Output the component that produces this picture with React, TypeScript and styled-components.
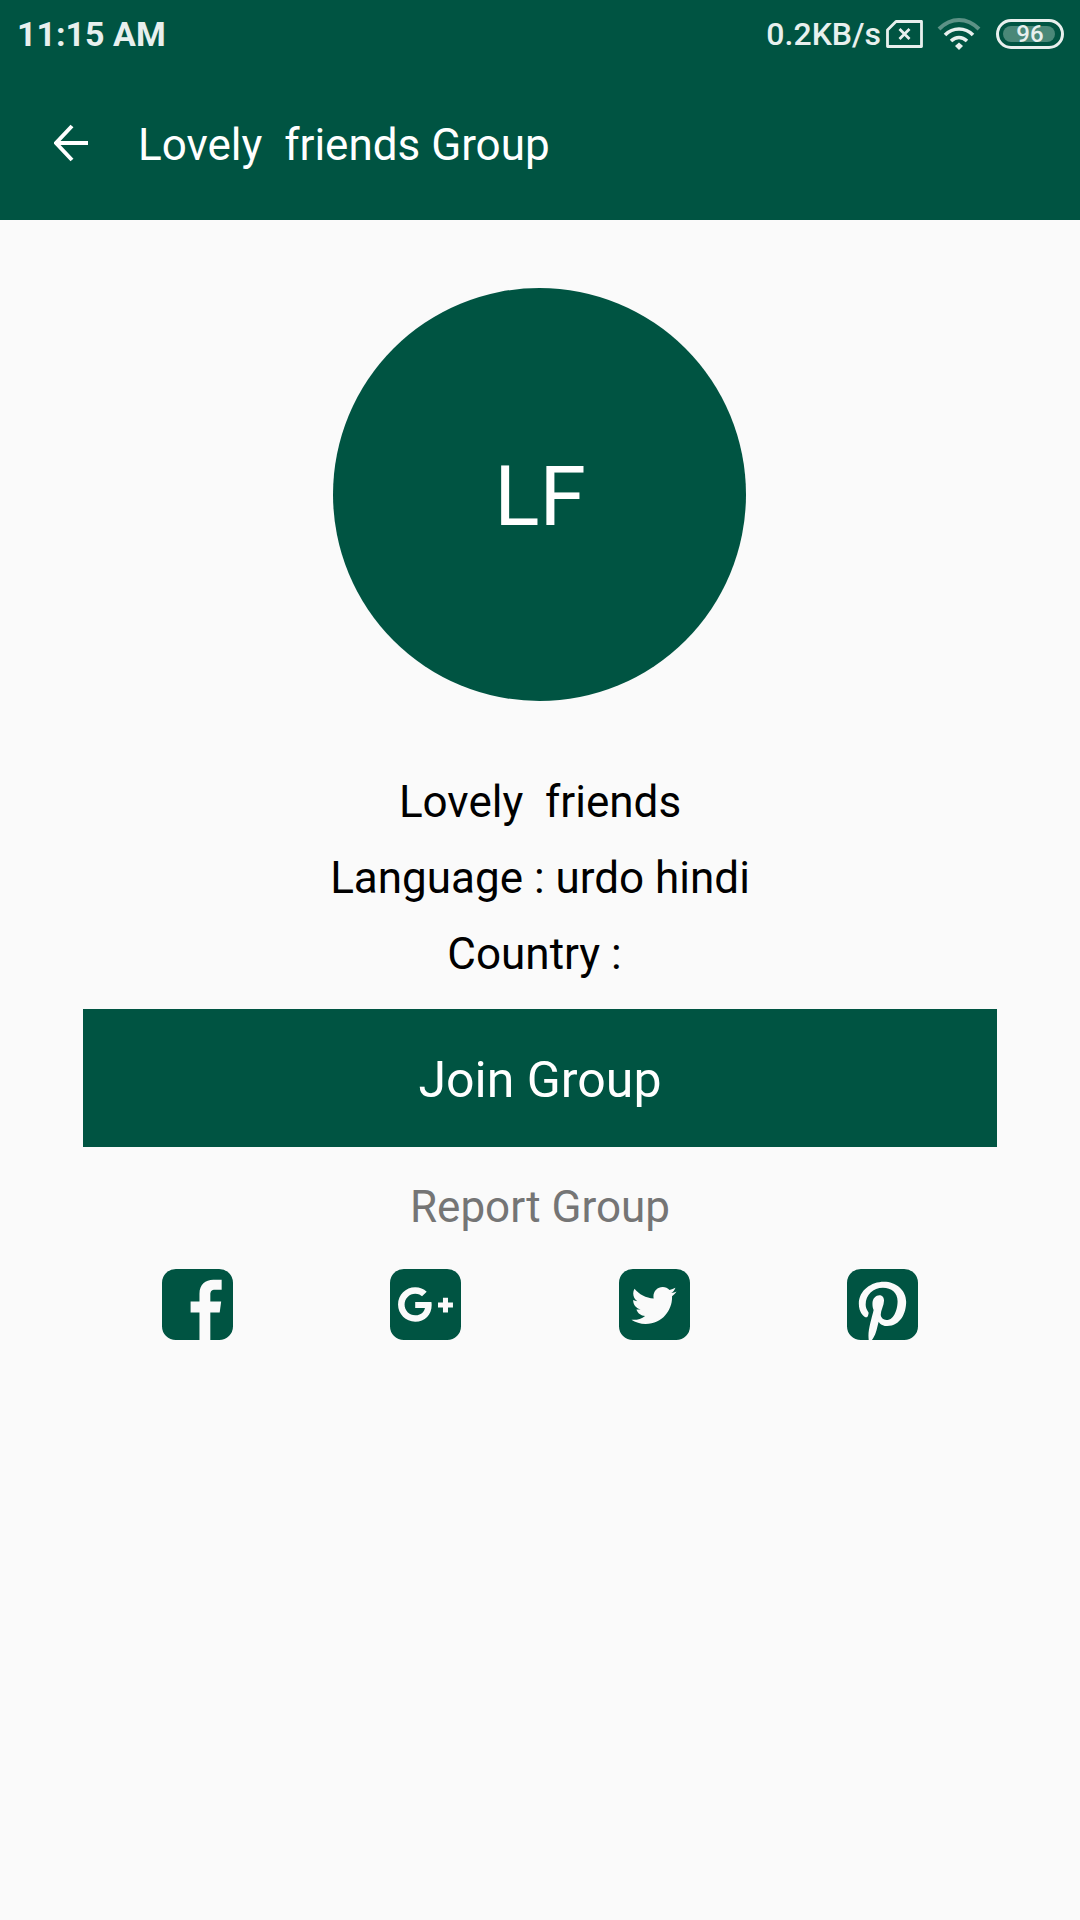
import React from 'react';
import styled, { createGlobalStyle } from 'styled-components';
import { FaGooglePlusG, FaPinterestP, FaTwitter } from 'react-icons/fa';

const GlobalStyle = createGlobalStyle`
  html, body {
    margin: 0;
    padding: 0;
    background: #fafafa;
  }
  * {
    box-sizing: border-box;
  }
`;

const GREEN = '#005442';
const PAGE = '#fafafa';

const SimIcon = () => (
  <svg width="37" height="28" viewBox="0 0 37 28" fill="none">
    <path d="M10 1.500H35.500V26.500H1.500V10Z" stroke="#e8f0ee" strokeWidth="2.8" strokeLinejoin="round" />
    <path d="M13.500 9L23.500 19M23.500 9L13.500 19" stroke="#e8f0ee" strokeWidth="2.8" />
  </svg>
);

const WifiIcon = () => (
  <svg width="44" height="32" viewBox="0 0 44 32" fill="none">
    <path d="M2 11C14 -1 30 -1 42 11" stroke="#e8f0ee" strokeOpacity="0.4" strokeWidth="4" />
    <path d="M8 17C16 9 28 9 36 17" stroke="#e8f0ee" strokeWidth="3.6" />
    <path d="M14 23C19 18.500 25 18.500 30 23" stroke="#e8f0ee" strokeWidth="3.6" />
    <path d="M18 28L22 24.500L26 28L22 32Z" fill="#e8f0ee" />
  </svg>
);

const BatteryIcon = () => (
  <Battery>
    <BatteryFill />
    <BatteryLevel>96</BatteryLevel>
  </Battery>
);

const BackIcon = () => (
  <svg width="34" height="38" viewBox="0 0 34 38" fill="none">
    <path d="M18 2L2 19L18 36M2 19H34" stroke="#ffffff" strokeWidth="4" />
  </svg>
);

const socialIcons = [
  {
    key: 'facebook',
    glyph: (
      <path
        d="M38 72V44H29V33H38V25C38 16 44 11 52 11H60.500V21H54C50 21 49 23 49 26V33H60L58.500 44H49V72Z"
        fill={PAGE}
      />
    ),
  },
  { key: 'google', glyph: <FaGooglePlusG x={7} y={7} size={58} color={PAGE} /> },
  { key: 'twitter', glyph: <FaTwitter x={12.500} y={14} size={46} color={PAGE} /> },
  { key: 'pinterest', glyph: <FaPinterestP x={4} y={12} size={64} color={PAGE} /> },
];

const App = (): JSX.Element => (
  <Screen>
    <GlobalStyle />
    <Header>
      <StatusBar>
        <Time>11:15 AM</Time>
        <StatusRight>
          <Speed>0.2KB/s</Speed>
          <SimIcon />
          <WifiSlot>
            <WifiIcon />
          </WifiSlot>
          <BatteryIcon />
        </StatusRight>
      </StatusBar>
      <Toolbar>
        <BackButton>
          <BackIcon />
        </BackButton>
        <ToolbarTitle>Lovely&nbsp; friends Group</ToolbarTitle>
      </Toolbar>
    </Header>
    <Content>
      <Avatar>LF</Avatar>
      <InfoList>
        <InfoLine>Lovely&nbsp; friends</InfoLine>
        <InfoLine>Language : urdo hindi</InfoLine>
        <InfoLine>Country :&nbsp;</InfoLine>
      </InfoList>
      <JoinButton>Join Group</JoinButton>
      <ReportLink>Report Group</ReportLink>
      <SocialRow>
        {socialIcons.map(({ key, glyph }) => (
          <SocialCell key={key}>
            <svg width="71" height="71" viewBox="0 0 72 72">
              <rect width="72" height="72" rx="14" fill={GREEN} />
              {glyph}
            </svg>
          </SocialCell>
        ))}
      </SocialRow>
    </Content>
  </Screen>
);

const Screen = styled.div`
  width: 1080px;
  height: 1920px;
  background: ${PAGE};
  font-family: Roboto, sans-serif;
  overflow: hidden;
`;

const Header = styled.header`
  height: 220px;
  background: ${GREEN};
  color: #ffffff;
`;

const StatusBar = styled.div`
  display: flex;
  align-items: center;
  justify-content: space-between;
  height: 68px;
  padding: 0 16px 0 17px;
  color: #e8f0ee;
`;

const Time = styled.span`
  font-size: 34px;
  font-weight: 700;
`;

const StatusRight = styled.div`
  display: flex;
  align-items: center;
`;

const Speed = styled.span`
  font-size: 32px;
  font-weight: 500;
  margin-right: 5px;
`;

const WifiSlot = styled.div`
  display: flex;
  margin: 0 15px 0 14px;
`;

const Battery = styled.div`
  position: relative;
  display: flex;
  align-items: center;
  justify-content: center;
  width: 68px;
  height: 30px;
  border: 3px solid #e8f0ee;
  border-radius: 15px;
`;

const BatteryFill = styled.div`
  position: absolute;
  top: 4px;
  bottom: 4px;
  left: 4px;
  right: 6px;
  background: #4a8878;
  border-radius: 8px;
`;

const BatteryLevel = styled.span`
  position: relative;
  font-size: 24px;
  font-weight: 500;
  line-height: 1;
`;

const Toolbar = styled.div`
  display: flex;
  align-items: center;
  height: 152px;
  padding-left: 54px;
  padding-top: 2px;
`;

const BackButton = styled.div`
  display: flex;
  width: 84px;
  margin-bottom: 4px;
`;

const ToolbarTitle = styled.h1`
  margin: 0;
  font-size: 44px;
  font-weight: 400;
  color: #ffffff;
`;

const Content = styled.main`
  display: flex;
  flex-direction: column;
  align-items: center;
  padding: 68px 83px 0;
`;

const Avatar = styled.div`
  display: flex;
  align-items: center;
  justify-content: center;
  width: 413px;
  height: 413px;
  margin-left: -1px;
  padding: 4px 0 0 1px;
  border-radius: 50%;
  background: ${GREEN};
  color: #ffffff;
  font-size: 84px;
`;

const InfoList = styled.div`
  display: flex;
  flex-direction: column;
  align-items: center;
  margin-top: 63px;
`;

const InfoLine = styled.div`
  font-size: 44px;
  line-height: 76px;
  color: #000000;
`;

const JoinButton = styled.button`
  width: 100%;
  height: 138px;
  margin-top: 17px;
  padding: 4px 0 0;
  border: 0;
  background: ${GREEN};
  color: #ffffff;
  font-family: inherit;
  font-size: 50px;
`;

const ReportLink = styled.div`
  margin-top: 35px;
  font-size: 44px;
  line-height: 50px;
  color: #757575;
`;

const SocialRow = styled.div`
  display: grid;
  grid-template-columns: repeat(4, 1fr);
  width: 100%;
  margin-top: 37px;
`;

const SocialCell = styled.div`
  display: flex;
  justify-content: center;
  line-height: 0;
`;

export default App;
